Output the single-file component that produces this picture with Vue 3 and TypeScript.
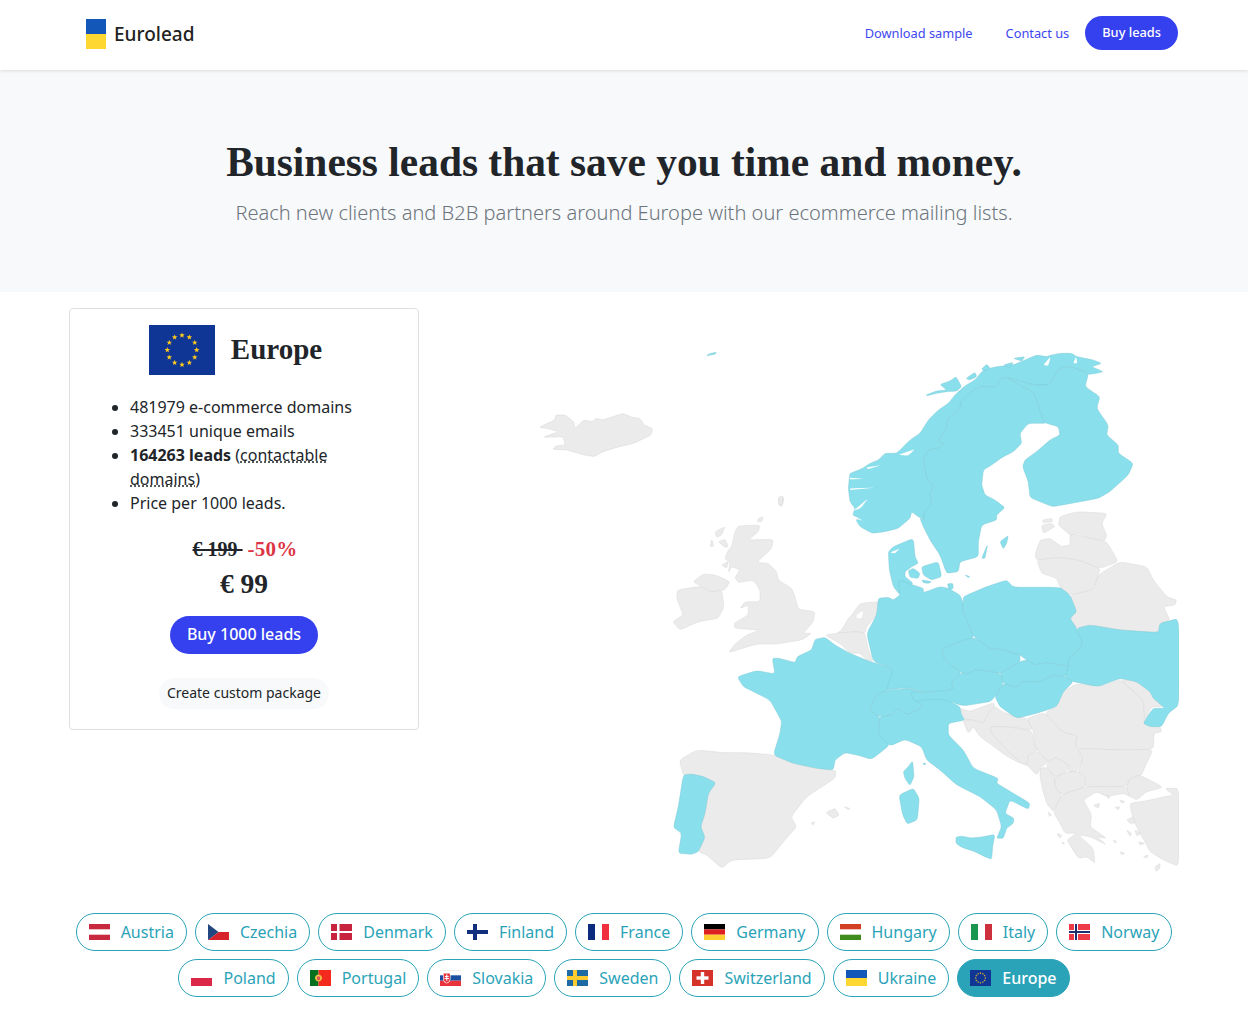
<template>
  <div class="page">
    <header class="topbar">
      <a class="brand">
        <span class="brand-flag"></span>
        <span class="brand-name">Eurolead</span>
      </a>
      <nav class="nav">
        <a class="nav-link nav-first">Download sample</a>
        <a class="nav-link">Contact us</a>
        <a class="nav-btn">Buy leads</a>
      </nav>
    </header>

    <section class="hero">
      <h1>Business leads that save you time and money.</h1>
      <p>Reach new clients and B2B partners around Europe with our ecommerce mailing lists.</p>
    </section>

    <main class="content">
      <aside class="card">
        <div class="card-head">
          <svg class="eu-flag" viewBox="0 0 66 50">
            <rect width="66" height="50" fill="#0f3595" />
            <polygon v-for="(s, i) in bigStars" :key="i" :points="s" fill="#fcc91c" />
          </svg>
          <h2>Europe</h2>
        </div>
        <ul class="facts">
          <li>481979 e-commerce domains</li>
          <li>333451 unique emails</li>
          <li><b>164263 leads</b> (<span class="dotted">contactable</span> <span class="dotted">domains</span>)</li>
          <li>Price per 1000 leads.</li>
        </ul>
        <div class="price-old"><s>€ 199&nbsp;</s><span class="off">-50%</span></div>
        <div class="price">€ 99</div>
        <a class="buy">Buy 1000 leads</a>
        <a class="custom">Create custom package</a>
      </aside>

      <svg class="map" viewBox="449 308 730 589">
        <g v-for="(g, i) in mapGroups" :key="i" :transform="g.t">
          <path v-for="(l, j) in g.polys" :key="j" :class="l[0]" :d="smooth(l[1])" />
        </g>
      </svg>
    </main>

    <div class="pills">
      <a v-for="c in countries" :key="c.name" class="pill" :class="{ active: c.name === 'Europe' }">
        <svg class="flag" viewBox="0 0 21 16">
          <path v-for="(p, i) in c.paths" :key="i" :d="p[1]" :fill="p[0]" />
          <polygon v-for="(s, i) in c.name === 'Europe' ? smallStars : []" :key="'s' + i" :points="s" fill="#fcc91c" />
        </svg>
        {{ c.name }}
      </a>
    </div>
  </div>
</template>

<script setup lang="ts">
type Land = [string, string];

// ring of 12 stars for the eu flag
const starRing = (cx: number, cy: number, ring: number, size: number) => {
  const out: string[] = [];
  for (let i = 0; i < 12; i++) {
    const a = (i * Math.PI) / 6;
    const x = cx + ring * Math.sin(a);
    const y = cy - ring * Math.cos(a);
    const pts: string[] = [];
    for (let k = 0; k < 10; k++) {
      const r = k % 2 ? size * 0.42 : size;
      const b = (k * Math.PI) / 5;
      pts.push((x + r * Math.sin(b)).toFixed(2) + "," + (y - r * Math.cos(b)).toFixed(2));
    }
    out.push(pts.join(" "));
  }
  return out;
};
const bigStars = starRing(33, 25, 14.7, 2.9);
const smallStars = starRing(10.5, 8, 4.8, 1.1);

// round the corners of a traced outline a little so coasts don't look cut with scissors
const smooth = (points: string) => {
  const pts = points.split(" ").map((s) => s.split(",").map(Number));
  const n = pts.length;
  const t = 0.2;
  let d = "";
  pts.forEach((p, i) => {
    const prev = pts[(i + n - 1) % n];
    const next = pts[(i + 1) % n];
    const ax = p[0] + (prev[0] - p[0]) * t;
    const ay = p[1] + (prev[1] - p[1]) * t;
    const bx = p[0] + (next[0] - p[0]) * t;
    const by = p[1] + (next[1] - p[1]) * t;
    d += `${i ? "L" : "M"}${ax.toFixed(1)} ${ay.toFixed(1)}Q${p[0]} ${p[1]} ${bx.toFixed(1)} ${by.toFixed(1)}`;
  });
  return d + "z";
};

const rects = (list: [string, number, number, number, number][]) =>
  list.map(([f, x, y, w, h]) => [f, `M${x} ${y}h${w}v${h}h${-w}z`]);

const countries = [
  { name: "Austria", paths: rects([["#c8293f", 0, 0, 21, 5.3], ["#c8293f", 0, 10.7, 21, 5.3]]) },
  { name: "Czechia", paths: [["#d7242a", "M0 16L10.5 8H21v8z"], ["#22467f", "M0 0l10.5 8L0 16z"]] },
  { name: "Denmark", paths: rects([["#c8243f", 0, 0, 6, 7], ["#c8243f", 8.5, 0, 12.5, 7], ["#c8243f", 0, 9, 6, 7], ["#c8243f", 8.5, 9, 12.5, 7]]) },
  { name: "Finland", paths: rects([["#12307e", 0, 6, 21, 4], ["#12307e", 6, 0, 4, 16]]) },
  { name: "France", paths: rects([["#0c2a80", 0, 0, 7, 16], ["#f0303f", 14, 0, 7, 16]]) },
  { name: "Germany", paths: rects([["#000000", 0, 0, 21, 5.4], ["#dd1f1f", 0, 5.4, 21, 5.3], ["#ffce33", 0, 10.7, 21, 5.3]]) },
  { name: "Hungary", paths: rects([["#d33f23", 0, 0, 21, 5.3], ["#3f8b1c", 0, 10.7, 21, 5.3]]) },
  { name: "Italy", paths: rects([["#199650", 0, 0, 7, 16], ["#ce2f3d", 14, 0, 7, 16]]) },
  { name: "Norway", paths: [...rects([["#ef3a48", 0, 0, 21, 16], ["#ffffff", 0, 6, 21, 4], ["#ffffff", 5, 0, 4, 16], ["#1f2d6e", 0, 7, 21, 2], ["#1f2d6e", 6, 0, 2, 16]])] },
  { name: "Poland", paths: rects([["#dc2848", 0, 8, 21, 8]]) },
  { name: "Portugal", paths: [...rects([["#07701f", 0, 0, 8.5, 16], ["#f42a1f", 8.5, 0, 12.5, 16]]), ["#e8c547", "M8.5 4.5a3.5 3.5 0 1 0 .01 0z"], ["#e05050", "M7 6.5h3v3q-1.5 1.5-3 0z"]] },
  { name: "Slovakia", paths: [...rects([["#eeeeee", 0, 0, 21, 1], ["#1c4fa0", 0, 5.3, 21, 5.4], ["#e8333c", 0, 10.7, 21, 5.3]]), ["#ffffff", "M3 3h7.500v5.500q0 3.500-3.750 5-3.750-1.500-3.750-5z"], ["#e8333c", "M3.600 3.600h6.300v5q0 3-3.150 4.300-3.150-1.300-3.150-4.300z"], ["#ffffff", "M6.200 4.600h1.100v1.300h1.300v1H7.300v1.200h1.700v1H7.300v1.700H6.200V9.100H4.500v-1h1.700V6.900H4.900v-1h1.300z"]] },
  { name: "Sweden", paths: rects([["#1d6aa5", 0, 0, 21, 16], ["#fecb2f", 0, 6, 21, 4], ["#fecb2f", 6, 0, 4, 16]]) },
  { name: "Switzerland", paths: rects([["#d5332a", 0, 0, 21, 16], ["#ffffff", 4.5, 6.3, 12, 3.4], ["#ffffff", 8.8, 2, 3.4, 12]]) },
  { name: "Ukraine", paths: rects([["#1358b8", 0, 0, 21, 8], ["#ffd733", 0, 8, 21, 8]]) },
  { name: "Europe", paths: rects([["#0f3595", 0, 0, 21, 16]]) },
];

const Z9 = "translate(840 345) scale(.3333)";
const Z10 = "translate(660 490) scale(.3333)";
const Z11 = "translate(860 500) scale(.3333)";
const Z6 = "translate(660 600) scale(.3333)";
const Z12 = "translate(950 670) scale(.3333)";

// traced by hand, each group in the coordinates of its own crop
const mapGroups: { t: string; polys: Land[] }[] = [
  {
    t: "translate(530 340) scale(.415 .3333)",
    polys: [
      ["grey", "22,262 60,240 62,225 85,225 105,245 108,265 130,240 150,245 160,235 175,240 225,220 245,232 265,235 275,255 295,265 292,285 250,310 215,320 175,335 155,350 130,345 90,330 55,328 62,318 85,315 80,290 30,292 70,275 40,265"],
      ["grey", "598,478 608,468 612,480 606,500 600,495"],
      ["blue", "425,47 435,40 450,37 445,43"],
    ],
  },
  {
    t: Z10,
    polys: [
      ["grey", "235,108 300,105 295,125 265,150 340,148 335,175 290,218 325,220 350,245 355,270 395,295 405,320 415,358 465,365 460,395 430,430 455,430 425,450 350,462 290,462 205,488 225,462 260,435 300,420 225,415 222,400 265,375 265,345 240,355 255,335 300,335 300,300 280,270 235,278 225,262 240,240 215,230 205,248 210,220 195,205 205,180 215,170 225,125"],
      ["grey", "52,300 115,290 130,292 150,305 185,300 192,350 175,385 115,395 60,420 38,395 70,375 50,325"],
      ["grey", "100,275 130,252 165,255 210,275 195,300 150,305 130,292 115,285"],
      ["grey", "165,125 195,110 185,135 170,142"],
      ["grey", "175,155 195,148 205,170 195,172"],
      ["grey", "155,148 162,168 150,170"],
      ["grey", "185,225 205,215 200,235"],
      ["grey", "295,85 310,80 305,95 292,95"],
      ["grey", "355,22 370,18 365,48 358,45"],
      ["grey", "660,335 600,340 575,375 565,385 545,420 530,430 590,425 615,430 620,410 650,375"],
      ["water", "590,375 610,362 605,385 590,385"],
      ["grey", "495,435 530,430 590,425 615,430 625,480 640,515 620,510 600,490 570,490 540,460"],
    ],
  },
  {
    t: Z6,
    polys: [
      ["grey", "58,480 110,450 190,458 260,458 340,465 400,490 470,505 528,512 525,535 440,590 393,650 410,680 375,720 330,775 215,780 185,805 140,765 115,755 135,712 122,680 135,640 145,580 168,548 130,530 95,535 70,525"],
      ["grey", "497,638 525,625 538,645 520,655"],
      ["grey", "552,620 570,625 565,630"],
      ["grey", "452,670 465,665 460,675"],
      ["blue", "70,525 95,522 130,530 168,548 145,580 135,640 122,680 135,712 115,755 95,763 55,760 65,700 40,682 55,620"],
      ["blue", "465,118 495,112 525,135 570,160 630,185 700,205 685,270 650,285 628,330 660,350 655,400 690,435 635,478 590,465 555,458 525,480 520,510 470,505 400,490 340,465 360,400 365,365 355,345 330,300 250,260 232,230 290,212 345,222 337,175 358,175 405,188 412,170 455,150"],
      ["blue", "758,483 762,530 750,557 735,535 730,515 745,500"],
      ["blue", "717,585 760,565 778,595 772,660 742,672 728,645"],
      ["blue", "788,490 798,490 795,495"],
      ["blue", "660,350 695,345 715,325 740,345 790,320 755,290 790,280 850,295 900,320 905,345 915,360 865,370 865,405 910,450 940,505 1015,535 1010,550 1060,580 1110,610 1105,628 1050,600 1035,640 1062,655 1060,670 1040,685 1030,715 1010,715 1025,680 1010,630 960,590 890,555 840,510 800,480 785,440 735,418 690,438 655,400"],
      ["blue", "888,712 905,708 930,714 960,712 1005,703 998,740 995,778 975,770 945,755 905,742 888,730"],
      ["blue", "628,330 650,285 685,270 750,265 790,280 755,290 790,320 740,345 715,325 695,345 660,350"],
    ],
  },
  {
    t: Z12,
    polys: [
      ["grey", "285,128 320,110 345,60 380,42 460,48 510,28 580,90 585,165 630,170 635,185 612,190 610,238 500,240 382,235 375,225 382,198 335,185"],
      ["grey", "510,28 570,35 605,70 640,110 605,110 585,150 580,90"],
      ["grey", "30,115 60,125 130,98 135,110 115,130 100,160 70,150 45,150"],
      ["grey", "45,150 70,150 100,160 115,130 135,110 165,130 230,145 250,180 170,170 120,170 125,190 180,250 230,285 200,275 165,255 125,225 90,200 70,170 55,190 40,155"],
      ["grey", "120,170 170,170 245,182 255,230 265,240 235,255 230,290 180,250 125,190"],
      ["grey", "230,145 285,128 335,185 382,198 375,225 400,265 380,305 355,305 355,285 318,262 295,275 265,245 255,230 250,180"],
      ["grey", "235,255 265,245 295,275 270,295 260,315 230,285"],
      ["grey", "295,275 318,262 355,285 350,305 315,322 290,290"],
      ["grey", "270,295 290,292 315,322 315,350 335,375 310,425 290,400 278,360 270,320"],
      ["grey", "315,322 355,305 385,305 407,325 405,350 335,375 315,350"],
      ["grey", "382,235 500,240 610,238 585,290 575,315 540,325 530,350 405,350 407,325 385,305 400,265"],
      ["grey", "310,425 335,375 405,350 530,350 540,380 520,370 470,380 440,365 400,390 425,435 420,470 470,505 440,500 470,525 420,500 385,495 430,535 435,580 410,560 385,565 350,510 380,490 345,490 330,460"],
      ["grey", "530,350 540,325 570,315 640,352 590,365 560,390 540,380"],
      ["grey", "540,400 590,392 670,375 645,355 687,355 687,590 640,570 600,545 585,515 570,490 555,460 545,430"],
      ["grey", "470,375 480,380 475,387"],
      ["grey", "495,412 510,410 505,420"],
      ["grey", "510,390 525,395 515,400"],
      ["grey", "530,450 550,440 555,460 540,460"],
      ["grey", "530,480 545,490 540,500"],
      ["grey", "555,480 575,490 560,498"],
      ["grey", "320,490 335,495 330,505"],
      ["grey", "335,515 345,520 338,522"],
      ["grey", "295,425 305,435 298,440"],
      ["grey", "430,405 450,400 445,415"],
      ["grey", "510,545 525,550 515,555"],
      ["grey", "565,515 585,520 570,525"],
      ["grey", "580,560 595,555 590,565"],
      ["grey", "615,590 630,580 630,595 618,605"],
      ["grey", "490,510 500,515 495,520"],
    ],
  },
  {
    t: Z11,
    polys: [
      ["grey", "630,285 700,268 715,225 780,185 860,200 880,240 920,290 950,300 945,315 910,320 930,360 900,370 895,398 780,390 690,375 650,385 630,355 650,335"],
      ["grey", "530,180 590,172 650,178 720,205 715,225 700,268 630,285 600,262 590,235 545,220"],
      ["grey", "525,165 540,120 570,115 605,140 630,135 630,100 690,115 740,125 775,185 720,205 650,178 590,172 530,180"],
      ["grey", "600,50 650,35 742,40 725,70 740,105 735,122 690,115 650,100 630,105 595,75"],
      ["grey", "545,75 575,70 585,80 550,100"],
      ["grey", "548,60 575,55 578,65 550,68"],
      ["blue", "85,155 100,140 160,115 165,170 175,190 155,200 135,215 135,230 160,250 120,285 100,260 88,210"],
      ["water", "90,158 120,145 105,160"],
      ["blue", "145,212 160,205 180,220 175,235 150,232"],
      ["blue", "185,200 235,185 245,230 215,240 190,225"],
      ["blue", "185,240 215,245 205,250 190,248"],
      ["blue", "262,252 278,250 280,265 268,270"],
      ["blue", "55,295 85,292 100,300 120,285 115,240 160,255 190,265 190,278 240,260 265,265 300,285 310,310 308,330 325,370 342,412 300,425 245,448 255,480 305,518 275,545 280,570 215,575 190,578 155,565 115,565 80,570 100,505 40,485 20,400 50,345"],
      ["blue", "310,290 375,262 440,240 460,262 600,262 630,285 650,335 630,355 650,385 670,435 625,480 630,500 560,488 525,495 500,480 480,465 445,455 410,445 395,450 342,412 325,370 308,330 310,310"],
      ["blue", "245,448 300,425 342,412 395,450 410,445 445,455 480,465 480,485 440,510 420,520 350,508 320,522 305,518 255,480"],
      ["blue", "420,520 440,510 480,485 500,480 525,495 560,488 630,500 615,530 580,525 540,545 490,545 470,562 430,550"],
      ["blue", "155,575 190,578 215,575 280,570 275,545 305,518 320,522 350,508 420,520 430,550 405,590 390,605 310,618 250,598 195,600 165,605 155,590"],
      ["blue", "430,550 470,562 490,545 540,545 580,525 615,530 640,545 610,575 590,620 530,640 470,655 420,620 405,590"],
      ["blue", "625,500 615,530 640,545 715,560 780,535 830,545 870,575 880,595 915,625 880,625 865,645 850,670 870,680 905,680 925,640 957,615 957,355 900,370 895,398 780,390 690,375 650,385 670,435 625,480"],
    ],
  },
  {
    t: Z9,
    polys: [
      ["blue", "97,565 60,545 48,525 60,520 38,510 45,490 30,470 25,430 28,400 30,385 65,372 90,355 115,345 135,325 170,325 210,285 240,265 265,225 295,195 325,175 345,150 372,125 405,105 430,75 470,65 520,60 555,45 590,30 620,35 635,30 660,25 695,25 710,35 760,45 785,55 755,65 790,80 770,85 745,88 735,80 690,65 655,72 640,100 625,120 580,120 530,105 500,97 480,103 470,125 420,125 395,140 365,165 360,190 325,220 320,245 295,290 312,298 300,308 265,315 250,345 262,405 285,425 270,440 275,480 252,500 252,525 235,515 215,500 210,520 175,550 135,560"],
      ["blue", "258,150 290,138 320,135 300,118 330,108 348,95 365,125 350,138 320,140 290,145 262,152"],
      ["blue", "378,100 405,82 410,95 390,105"],
      ["blue", "425,72 440,58 450,68 435,78"],
      ["blue", "490,60 520,52 510,68"],
      ["blue", "520,40 555,35 545,48"],
      ["blue", "252,525 252,500 275,480 270,440 285,425 262,405 250,345 265,315 300,308 312,298 295,290 320,245 325,220 360,190 365,165 395,140 420,125 470,125 480,103 500,97 530,115 580,140 595,180 610,225 620,235 565,235 540,265 545,295 520,320 490,335 455,360 430,375 425,420 435,450 465,465 495,488 470,510 470,525 425,540 415,590 415,635 360,650 355,680 320,685 300,630 270,585 250,545 240,520"],
      ["blue", "500,97 530,105 580,120 625,120 640,100 655,72 690,65 735,80 745,88 735,125 780,155 770,190 805,240 800,270 835,300 835,325 880,355 865,390 810,440 775,460 640,485 625,480 570,458 565,410 548,365 555,345 590,320 630,285 660,270 655,245 620,235 610,225 595,180 580,140 530,115"],
      ["water", "30,398 75,402 30,403"],
      ["water", "30,430 110,428 30,435"],
      ["water", "40,497 85,460 62,490"],
      ["water", "45,515 70,528 52,522"],
      ["water", "78,368 125,360 85,372"],
      ["water", "175,330 225,312 205,332"],
      ["water", "610,60 632,35 625,62"],
      ["water", "700,55 708,35 712,55"],
      ["blue", "375,690 390,695 385,698"],
      ["blue", "480,590 505,572 500,595 490,612"],
      ["blue", "425,640 443,598 435,640"],
    ],
  },
];
</script>

<style>
html,
body {
  margin: 0;
  background: #fff;
}
</style>

<style scoped>
.page {
  font-family: "Noto Sans", sans-serif;
  color: #212529;
  font-size: 16px;
}
.topbar {
  height: 70px;
  box-sizing: border-box;
  padding: 0 70px 2px 86px;
  display: flex;
  align-items: center;
  justify-content: space-between;
  box-shadow: 0 1px 3px rgba(0, 0, 0, 0.12);
  position: relative;
}
.brand {
  display: flex;
  align-items: center;
  gap: 8px;
}
.brand-flag {
  width: 20px;
  height: 30px;
  background: linear-gradient(#1358b8 50%, #ffd733 50%);
}
.brand-name {
  font-size: 19px;
  font-weight: 500;
  color: #222;
}
.nav {
  display: flex;
  align-items: center;
  font-size: 12.8px;
  margin-bottom: 2px;
}
.nav-link {
  color: #3d46f0;
  margin-right: 16px;
}
.nav-first {
  margin-right: 33px;
}
.nav-btn {
  height: 34px;
  line-height: 33px;
  padding: 0 17px;
  background: #3540ee;
  color: #fff;
  border-radius: 17px;
  font-weight: 500;
}
.hero {
  height: 222px;
  box-sizing: border-box;
  background: #f8f9fa;
  text-align: center;
  padding-top: 66px;
}
.hero h1 {
  margin: 0;
  font-family: "Liberation Serif", serif;
  font-size: 41.4px;
  line-height: 52px;
  font-weight: 700;
  color: #212529;
}
.hero p {
  margin: 10px 0 0;
  font-size: 20.05px;
  line-height: 30px;
  font-weight: 300;
  color: #6c757d;
}
.content {
  display: flex;
  justify-content: space-between;
  align-items: flex-start;
  padding: 16px 69px 0;
}
.card {
  width: 350px;
  height: 422px;
  box-sizing: border-box;
  border: 1px solid #dfdfdf;
  border-radius: 4px;
  padding-top: 16px;
  display: flex;
  flex-direction: column;
  align-items: center;
}
.card-head {
  display: flex;
  align-items: center;
  gap: 16px;
  margin-right: 17px;
}
.eu-flag {
  width: 66px;
  height: 50px;
  display: block;
}
.card-head h2 {
  margin: 0 0 2px;
  font-family: "Liberation Serif", serif;
  font-size: 29px;
  font-weight: 700;
}
.facts {
  align-self: stretch;
  margin: 20px 38px 0 0;
  padding: 0 0 0 60px;
  line-height: 24px;
  font-size: 16px;
}
.dotted {
  text-decoration: underline dotted;
}
.price-old {
  margin-top: 22px;
  font-family: "Liberation Serif", serif;
  font-weight: 700;
  font-size: 20px;
  line-height: 24px;
  padding-left: 2px;
}
.off {
  margin-left: 5px;
  color: #dc3545;
  font-size: 21px;
  letter-spacing: 0.2px;
}
.price {
  margin-top: 5px;
  font-family: "Liberation Serif", serif;
  font-weight: 700;
  font-size: 27.5px;
  line-height: 36px;
}
.buy {
  margin-top: 14px;
  height: 38px;
  line-height: 37px;
  padding: 0 17px;
  background: #3540ee;
  color: #fff;
  border-radius: 19px;
  font-weight: 500;
  font-size: 16px;
}
.custom {
  margin-top: 24px;
  height: 31px;
  line-height: 30px;
  padding: 0 8px;
  background: #f8f9fa;
  border-radius: 16px;
  font-size: 14px;
}
.map {
  width: 730px;
  height: 589px;
  display: block;
  flex: none;
}
.grey {
  fill: #ebebeb;
  stroke: #d6d6d6;
  stroke-width: 1.3;
  stroke-linejoin: round;
}
.blue {
  fill: #8adfec;
  stroke: #79c6d3;
  stroke-width: 1.3;
  stroke-linejoin: round;
}
.water {
  fill: #fff;
}
.pills {
  margin-top: 16px;
  padding: 0 60px;
  display: flex;
  flex-wrap: wrap;
  justify-content: center;
  gap: 8px;
}
.pill {
  height: 38px;
  box-sizing: border-box;
  border: 1px solid #2aa3b8;
  border-radius: 19px;
  padding: 0 12px;
  display: flex;
  align-items: center;
  gap: 11px;
  color: #2aa3b8;
  font-size: 16px;
}
.pill.active {
  background: #2aa3b8;
  color: #fff;
  font-weight: 500;
}
.flag {
  width: 21px;
  height: 16px;
  display: block;
}
</style>
